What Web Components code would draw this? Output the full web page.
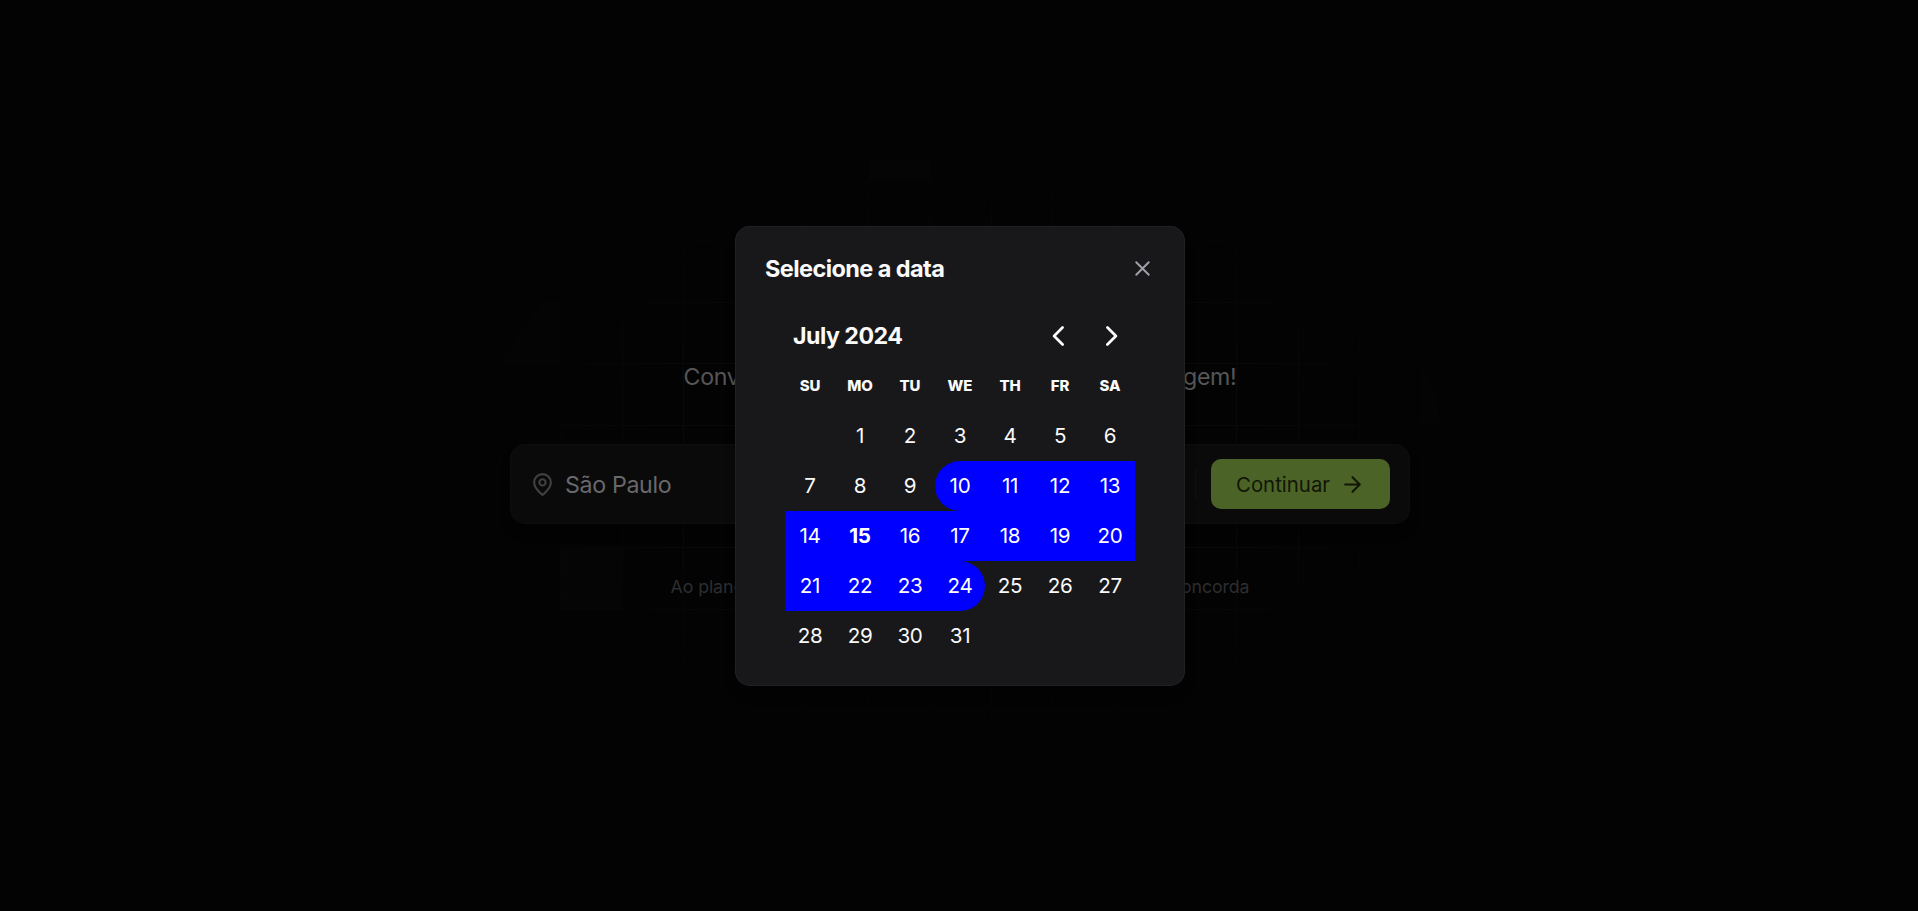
<!DOCTYPE html>
<html lang="pt-BR"><head><meta charset="utf-8"><title>plann.er</title>
<style>html,body{margin:0;height:100%;overflow:hidden;background:#030303}body{font-family:Inter,sans-serif;color:#fafafa}</style></head>
<body><trip-page></trip-page>
<script>
const define=(name,html,init)=>customElements.define(name,class extends HTMLElement{
  constructor(){super();const t=document.createElement('template');t.innerHTML=html;this.attachShadow({mode:'open'}).append(t.content.cloneNode(true));if(init)init.call(this,this.shadowRoot)}
});

define('grid-backdrop',`<style>:host{display:block;position:absolute;inset:0}svg{display:block}</style>
<svg width="1918" height="911" aria-hidden="true">
<defs><radialGradient id="f" gradientUnits="userSpaceOnUse" cx="959" cy="455" r="500" gradientTransform="translate(0 182) scale(1 .6)"><stop offset=".6" stop-color="#fff"/><stop offset="1" stop-color="#000"/></radialGradient>
<mask id="m" maskUnits="userSpaceOnUse" x="0" y="0" width="1918" height="911"><rect width="1918" height="911" fill="url(#f)"/></mask></defs>
<g fill="#050505"><rect x="560" y="548" width="62" height="62"/><rect x="869" y="160" width="61" height="19"/></g><g fill="#040405"><path d="M560 302H541L499 363H560Z"/><path d="M1422 364Q1438 390 1440 425H1422Z"/></g>
<path class="lines" mask="url(#m)" fill="#09090a" shape-rendering="crispEdges"/></svg>`,function(root){
  let d='';
  for(let i=0;i<16;i++)d+='M'+Math.floor(499.6+61.44*i)+' 0h1v911h-1z';
  for(let i=0;i<11;i++)d+='M0 '+Math.floor(179.3+61.44*i)+'h1918v1h-1918z';
  root.querySelector('.lines').setAttribute('d',d);
});

define('location-field',`<style>:host{display:flex;align-items:center;gap:10px;font-size:23.2px;letter-spacing:-.35px;line-height:28px;color:#68686a}svg{flex:none;color:#414144}span{position:relative;top:1px}</style>
<svg width="25" height="25" viewBox="0 0 24 24" fill="none" stroke="currentColor" stroke-width="2" stroke-linecap="round" stroke-linejoin="round"><path d="M20 10c0 6-8 12-8 12s-8-6-8-12a8 8 0 0 1 16 0Z"/><circle cx="12" cy="10" r="3"/></svg><span><slot></slot></span>`);

define('continue-button',`<style>:host{display:block}button{display:flex;align-items:center;justify-content:space-between;box-sizing:border-box;width:179px;height:50px;padding:0 25px;border:0;border-radius:10px;background:#4c6328;color:#111605;font:400 20.4px Inter,sans-serif;white-space:nowrap}svg{flex:none}</style>
<button><span><slot></slot></span><svg width="25" height="25" viewBox="0 0 24 24" fill="none" stroke="currentColor" stroke-width="2" stroke-linecap="round" stroke-linejoin="round"><path d="M5 12h14M12 5l7 7-7 7"/></svg></button>`);

define('search-bar',`<style>:host{display:flex;box-sizing:border-box;width:900px;height:80px;align-items:center;padding:0 20px;border-radius:15px;background:#0a0a0b;box-shadow:0 0 0 1px #0d0d0e inset,0 10px 10px #0004}.s{margin-left:auto;width:1px;height:30px;background:#101011;margin-right:15px}</style>
<slot name="place"></slot><span class="s"></span><slot name="action"></slot>`);

define('range-calendar',`<style>
:host{display:block;width:350px}
header{display:flex;align-items:center;justify-content:space-between;height:50px;padding-left:8px}
h3{margin:0;font-size:23.2px;letter-spacing:-.52px;line-height:28px;font-weight:750}
nav{display:flex}
button{display:grid;place-items:center;width:50px;height:50px;border:0;padding:0;background:none;color:inherit}
.grid{display:grid;grid-template-columns:repeat(7,50px);grid-auto-rows:50px}
.grid>*{box-sizing:border-box;padding-bottom:2px;display:flex;align-items:center;justify-content:center;font-size:20.6px;letter-spacing:-.3px;font-weight:430}
.grid>b{font-size:15px;letter-spacing:-.1px;font-weight:760}
.grid>.r{background:#00f;color:#fff}.start{border-radius:25px 0 0 25px}.end{border-radius:0 25px 25px 0}.grid>.today{font-weight:700}
</style><header><h3>July 2024</h3><nav><button aria-label="Previous"><svg width="20" height="20" viewBox="0 0 120 120" fill="currentColor"><path d="M69.49 3.39a8.1 8.1 0 0 1 11.44-.15 8.1 8.1 0 0 1 .47 10.96l-.5.48L36.1 60l45.26 45.3a8.1 8.1 0 0 1 .5 10.97l-.47.5a8.1 8.1 0 0 1-10.95.47l-.5-.47L18.75 65.8a8.1 8.1 0 0 1-.47-10.95l.47-.5z"/></svg></button><button aria-label="Next"><svg width="20" height="20" viewBox="0 0 120 120" fill="currentColor"><path transform="matrix(-1 0 0 1 120 0)" d="M69.49 3.39a8.1 8.1 0 0 1 11.44-.15 8.1 8.1 0 0 1 .47 10.96l-.5.48L36.1 60l45.26 45.3a8.1 8.1 0 0 1 .5 10.97l-.47.5a8.1 8.1 0 0 1-10.95.47l-.5-.47L18.75 65.8a8.1 8.1 0 0 1-.47-10.95l.47-.5z"/></svg></button></nav></header><div class="grid"></div>`,function(root){
  const g=root.querySelector('.grid');
  for(const d of ['SU','MO','TU','WE','TH','FR','SA']){const b=document.createElement('b');b.textContent=d;g.append(b)}
  g.append(document.createElement('span'));
  for(let d=1;d<=31;d++){const c=document.createElement('span');c.textContent=d;
    if(d>=10&&d<=24)c.classList.add('r');
    if(d===10)c.classList.add('start');if(d===24)c.classList.add('end');if(d===15)c.classList.add('today');
    g.append(c)}
});

define('date-dialog',`<style>
:host{display:block;box-sizing:border-box;width:450px;height:460px;padding:25px 30px;border-radius:15px;background:#18181b;box-shadow:inset 0 0 0 1px #212124,0 10px 10px #0004}
.top{display:flex;align-items:center;justify-content:space-between;height:35px}
h2{margin:0;font-size:23.5px;letter-spacing:-.58px;line-height:35px;font-weight:660}
button{padding:0;border:0;background:none;color:#a1a1aa;display:flex}
.body{margin:25px 20px 0}
</style><div class="top"><h2><slot name="title"></slot></h2><button aria-label="Fechar"><svg width="25" height="25" viewBox="0 0 24 24" fill="none" stroke="currentColor" stroke-width="1.8" stroke-linecap="round"><path d="M18 6 6 18M6 6l12 12"/></svg></button></div><div class="body"><slot></slot></div>`);

define('trip-page',`<style>
:host{display:block;position:relative;width:1918px;height:911px;overflow:hidden;background:#030303}
main{position:relative;display:flex;flex-direction:column;align-items:center;padding:360px 0 0 2px}
p{margin:0;display:flex;justify-content:space-between;white-space:nowrap}
.lead{width:553px;font-size:23.2px;letter-spacing:-.3px;line-height:35px;color:#565658}
search-bar{margin:49px 0 50px}
.note{width:579px;font-size:17.8px;letter-spacing:-.1px;line-height:25px;color:#2d2d30}
.layer{position:absolute;inset:0;display:grid;justify-items:center;align-items:start;padding:226px 0 0 2px}
</style><grid-backdrop></grid-backdrop>
<main><p class="lead"><span>Conv</span><span>gem!</span></p>
<search-bar><location-field slot="place">São Paulo</location-field><continue-button slot="action">Continuar</continue-button></search-bar>
<p class="note"><span>Ao plane</span><span>concorda</span></p></main>
<div class="layer"><date-dialog><span slot="title">Selecione a data</span><range-calendar></range-calendar></date-dialog></div>`);
</script></body></html>
